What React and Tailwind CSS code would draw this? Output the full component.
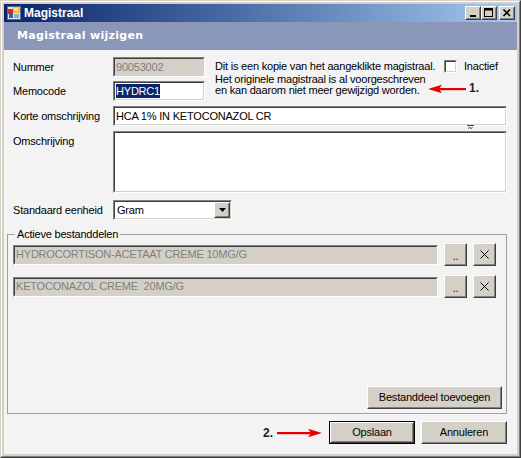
import React from 'react';
import clsx from 'clsx';

// classic 3D sunken edit border
function Sunken({ className, innerClassName, children }) {
  return (
    <div className={clsx('border border-t-[#808080] border-l-[#808080] border-r-white border-b-white', className)}>
      <div
        className={clsx(
          'flex h-full w-full items-center overflow-hidden border border-t-[#404040] border-l-[#404040] border-r-[#d4d0c8] border-b-[#d4d0c8]',
          innerClassName
        )}
      >
        {children}
      </div>
    </div>
  );
}

// classic raised push button
function Raised({ className, children, isDefault }) {
  const btn = (
    <div
      className={clsx(
        'border border-t-white border-l-white border-r-[#404040] border-b-[#404040] bg-[#d4d0c8]',
        isDefault ? 'h-full w-full' : className
      )}
    >
      <div className="flex h-full w-full items-center justify-center border border-t-[#d4d0c8] border-l-[#d4d0c8] border-r-[#808080] border-b-[#808080]">
        {children}
      </div>
    </div>
  );
  if (isDefault) return <div className={clsx('border border-black', className)}>{btn}</div>;
  return btn;
}

function RedArrow({ dir = 'left', width = 38 }) {
  const w = width;
  if (dir === 'left') {
    return (
      <svg width={w} height="10" viewBox={`0 0 ${w} 10`}>
        <rect x="10" y="4" width={w - 10} height="2.2" fill="#e80000" />
        <path d="M0 5 L14 0.8 L11 5 L14 9.2 Z" fill="#e80000" />
      </svg>
    );
  }
  return (
    <svg width={w} height="10" viewBox={`0 0 ${w} 10`}>
      <rect x="0" y="4" width={w - 10} height="2.2" fill="#e80000" />
      <path d={`M${w} 5 L${w - 14} 0.8 L${w - 11} 5 L${w - 14} 9.2 Z`} fill="#e80000" />
    </svg>
  );
}

function AppIcon() {
  return (
    <svg width="16" height="16" viewBox="0 0 16 16">
      <rect x="1" y="1" width="14" height="14" fill="#5a6a9a" />
      <rect x="2" y="2" width="12" height="12" fill="#dfe3ee" />
      <rect x="2" y="4" width="5" height="5" fill="#d8262a" />
      <rect x="7" y="2" width="7" height="6" fill="#f6c21c" />
      <rect x="8" y="3" width="4" height="3" fill="#ffe67a" />
      <rect x="3" y="9" width="4" height="4" fill="#2f5fc8" />
      <rect x="8" y="9" width="5" height="4" fill="#9aa6c2" />
    </svg>
  );
}

export default function App() {
  return (
    <div className="h-[458px] w-[521px] font-['Liberation_Sans',Arial,sans-serif] text-[11px] tracking-[-0.2px] text-black">
      <div className="h-full border border-t-[#d4d0c8] border-l-[#d4d0c8] border-r-[#404040] border-b-[#404040] bg-[#d4d0c8]">
        <div className="flex h-full flex-col border border-t-white border-l-white border-r-[#808080] border-b-[#808080] p-[2px]">
          {/* Title bar */}
          <div className="flex h-[18px] items-center bg-linear-to-r from-[#0a246a] to-[#a6caf0] pl-[2px] pr-[2px]">
            <AppIcon />
            <span className="ml-[2px] text-[12px] font-bold tracking-normal text-white">Magistraal</span>
            <div className="ml-auto flex items-center">
              <Raised className="h-[14px] w-[16px]">
                <svg width="12" height="10" viewBox="0 0 12 10">
                  <rect x="3" y="7" width="6" height="2" fill="black" />
                </svg>
              </Raised>
              <Raised className="h-[14px] w-[16px]">
                <svg width="12" height="10" viewBox="0 0 12 10">
                  <rect x="1.5" y="0.5" width="8" height="8" fill="none" stroke="black" />
                  <rect x="1" y="1" width="9" height="1.5" fill="black" />
                </svg>
              </Raised>
              <Raised className="ml-[2px] h-[14px] w-[16px]">
                <svg width="12" height="10" viewBox="0 0 12 10">
                  <path d="M2.5 1.5 L9 8 M9 1.5 L2.5 8" stroke="black" strokeWidth="1.7" />
                </svg>
              </Raised>
            </div>
          </div>

          {/* Client area */}
          <div className="flex flex-1 flex-col bg-[#f3f3f3]">
            <div className="flex h-[28px] items-center bg-[#8a97b8] pl-[13px] pt-[1px]">
              <span className="font-['DejaVu_Sans',sans-serif] text-[11px] font-bold tracking-[0.3px] text-white">
                Magistraal wijzigen
              </span>
            </div>

            <div className="flex flex-col pt-[7px]">
              {/* Nummer / Memocode / info */}
              <div className="relative flex pl-[9px]">
                <div className="flex w-[192px] flex-col">
                  <div className="flex h-[20px] items-center">
                    <span className="w-[100px]">Nummer</span>
                    <Sunken className="h-[20px] w-[92px]" innerClassName="bg-[#d4d0c8] pl-[1px] text-[#808080]">
                      90053002
                    </Sunken>
                  </div>
                  <div className="mt-[4px] flex h-[20px] items-center">
                    <span className="w-[100px]">Memocode</span>
                    <Sunken className="h-[20px] w-[92px]" innerClassName="bg-white pl-[1px]">
                      <span className="bg-[#0a246a] leading-[14px] text-white">HYDRC1</span>
                    </Sunken>
                  </div>
                </div>
                <div className="ml-[10px] w-[229px] whitespace-nowrap pt-[3px]">
                  <div className="leading-[13px]">Dit is een kopie van het aangeklikte magistraal.</div>
                  <div className="mt-[1px] leading-[11px]">
                    Het originele magistraal is al voorgeschreven
                    <br />
                    en kan daarom niet meer gewijzigd worden.
                  </div>
                </div>
                <div className="flex items-start pt-[3px]">
                  <Sunken className="h-[13px] w-[13px]" innerClassName="bg-white" />
                  <span className="ml-[7px] leading-[13px]">Inactief</span>
                </div>

                <div className="absolute left-[424px] top-[27px]">
                  <RedArrow dir="left" width={38} />
                </div>
                <span className="absolute left-[465px] top-[25px] text-[12px] font-bold leading-[13px] tracking-normal text-[#222]">
                  1.
                </span>
              </div>

              {/* Korte omschrijving */}
              <div className="relative mt-[5px] flex h-[20px] items-center pl-[9px] pr-[10px]">
                <span className="w-[100px]">Korte omschrijving</span>
                <Sunken className="h-[20px] flex-1" innerClassName="bg-white pl-[1px]">
                  HCA 1% IN KETOCONAZOL CR
                </Sunken>
                <svg className="absolute left-[463px] top-[19px]" width="7" height="4" viewBox="0 0 7 4">
                  <path d="M0 0.5 H7 M1 3.5 L2.5 2.5 L4 3.5 L5.5 2.5" stroke="#444" strokeWidth="1" fill="none" />
                </svg>
              </div>

              {/* Omschrijving */}
              <div className="mt-[5px] flex items-start pl-[9px] pr-[10px]">
                <span className="w-[100px] pt-[4px] leading-[13px]">Omschrijving</span>
                <Sunken className="h-[62px] flex-1" innerClassName="bg-white" />
              </div>

              {/* Standaard eenheid */}
              <div className="mt-[7px] flex h-[20px] items-center pl-[9px]">
                <span className="w-[100px]">Standaard eenheid</span>
                <Sunken className="h-[20px] w-[119px]" innerClassName="bg-white">
                  <span className="flex-1 pl-[2px]">Gram</span>
                  <Raised className="h-[16px] w-[16px]">
                    <svg width="7" height="4" viewBox="0 0 7 4">
                      <path d="M0 0 H7 L3.5 4 Z" fill="black" />
                    </svg>
                  </Raised>
                </Sunken>
              </div>

              {/* Actieve bestanddelen */}
              <fieldset className="ml-[3px] mt-[8px] w-[500px] border border-[#a0a0a0]">
                <legend className="ml-[7px] px-[2px] leading-[13px]">Actieve bestanddelen</legend>
                <div className="flex h-[172px] flex-col">
                  <div className="mt-[2px] flex h-[23px] items-center pl-[5px]">
                    <Sunken className="h-[20px] w-[425px]" innerClassName="bg-[#d4d0c8] pl-[1px] text-[#808080]">
                      HYDROCORTISON-ACETAAT CREME 10MG/G
                    </Sunken>
                    <Raised className="ml-[6px] h-[23px] w-[23px]">
                      <span className="pt-[4px] leading-[13px]">..</span>
                    </Raised>
                    <Raised className="ml-[6px] h-[23px] w-[23px]">
                      <svg width="9" height="9" viewBox="0 0 9 9">
                        <path d="M0.5 0.5 L8.5 8.5 M8.5 0.5 L0.5 8.5" stroke="black" strokeWidth="1" />
                      </svg>
                    </Raised>
                  </div>
                  <div className="mt-[9px] flex h-[23px] items-center pl-[5px]">
                    <Sunken
                      className="h-[20px] w-[425px]"
                      innerClassName="whitespace-pre bg-[#d4d0c8] pl-[1px] text-[#808080]"
                    >
                      {'KETOCONAZOL CREME  20MG/G'}
                    </Sunken>
                    <Raised className="ml-[6px] h-[23px] w-[23px]">
                      <span className="pt-[4px] leading-[13px]">..</span>
                    </Raised>
                    <Raised className="ml-[6px] h-[23px] w-[23px]">
                      <svg width="9" height="9" viewBox="0 0 9 9">
                        <path d="M0.5 0.5 L8.5 8.5 M8.5 0.5 L0.5 8.5" stroke="black" strokeWidth="1" />
                      </svg>
                    </Raised>
                  </div>
                  <div className="mt-[88px] flex justify-end pr-[4px]">
                    <Raised className="h-[23px] w-[135px]">Bestanddeel toevoegen</Raised>
                  </div>
                </div>
              </fieldset>

              {/* Buttons */}
              <div className="mt-[7px] flex items-center justify-end pr-[10px]">
                <span className="text-[12px] font-bold tracking-normal text-[#222]">2.</span>
                <div className="ml-[4px] flex">
                  <RedArrow dir="right" width={45} />
                </div>
                <Raised isDefault className="ml-[7px] h-[23px] w-[86px]">
                  Opslaan
                </Raised>
                <Raised className="ml-[6px] h-[23px] w-[86px]">Annuleren</Raised>
              </div>
            </div>
          </div>
        </div>
      </div>
    </div>
  );
}
